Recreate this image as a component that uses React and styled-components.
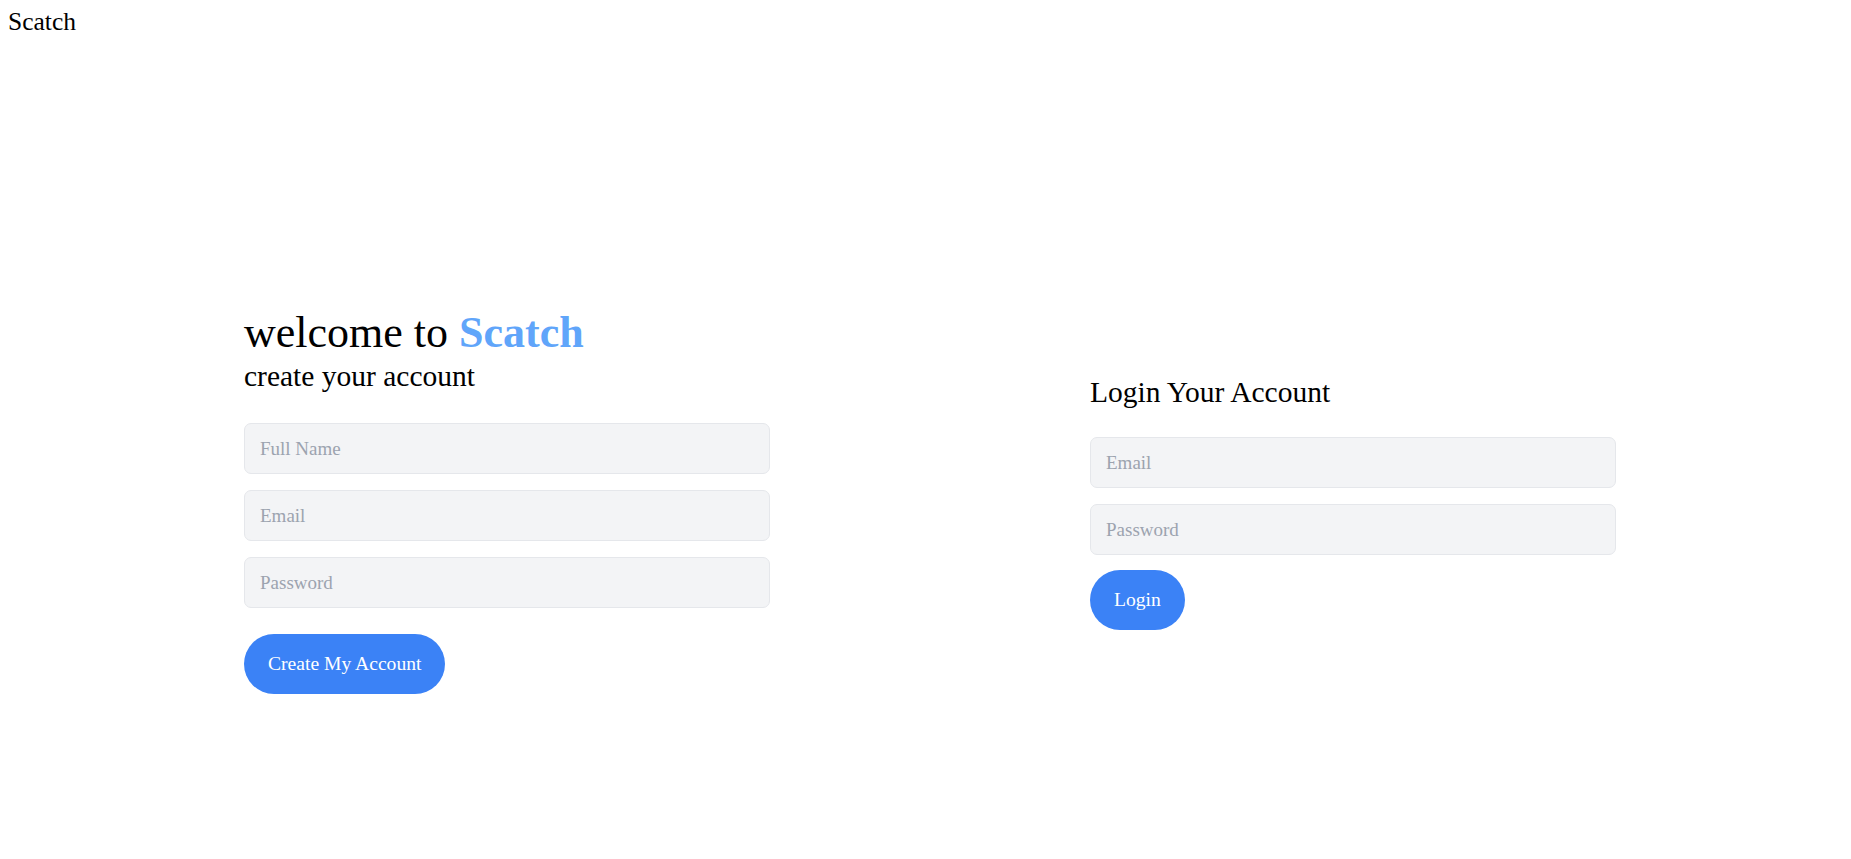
import styled, { createGlobalStyle } from "styled-components";

const GlobalStyle = createGlobalStyle`
  body {
    margin: 8px;
    font-family: "Liberation Serif", "Times New Roman", serif;
    color: #000000;
    background: #ffffff;
  }
  * {
    box-sizing: border-box;
  }
`;

const Brand = styled.div`
  font-size: 25.5px;
  line-height: 27px;
`;

const Main = styled.main`
  display: grid;
  grid-template-columns: 846px 526px;
  align-items: center;
  padding: 274px 0 0 236px;
`;

const Panel = styled.section`
  display: flex;
  flex-direction: column;
  align-items: flex-start;
`;

const Title = styled.h2`
  margin: 0;
  font-size: 44px;
  font-weight: 400;
  line-height: 48px;
  white-space: nowrap;
`;

const Accent = styled.span`
  color: #60a5fa;
  font-weight: 700;
`;

const SubTitle = styled.h3`
  margin: 0 0 ${(p) => p.$gap || 28}px;
  font-size: ${(p) => p.$size || 29.5}px;
  font-weight: 400;
  line-height: 38px;
`;

const Form = styled.form`
  display: flex;
  flex-direction: column;
  align-items: flex-start;
  width: 100%;
`;

const Field = styled.input`
  width: 526px;
  height: 51px;
  margin: 0 0 ${(p) => p.$gap || 16}px;
  padding: 0 15px;
  font-family: "Liberation Serif", "Times New Roman", serif;
  font-size: 19px;
  color: #111827;
  background: #f3f4f6;
  border: 1px solid #e5e7eb;
  border-radius: 7px;
  outline: none;

  &::placeholder {
    color: #9ca3af;
  }
`;

const Button = styled.button`
  height: 60px;
  margin-top: ${(p) => p.$top || 0}px;
  padding: 0 24px;
  font-family: "Liberation Serif", "Times New Roman", serif;
  font-size: 19.6px;
  color: #ffffff;
  background: #3b82f6;
  border: none;
  border-radius: 9999px;
  cursor: pointer;
`;

const App = () => {
  const stop = (e) => e.preventDefault();

  return (
    <>
      <GlobalStyle />
      <Brand>Scatch</Brand>
      <Main>
        <Panel>
          <Title>
            welcome to <Accent>Scatch</Accent>
          </Title>
          <SubTitle>create your account</SubTitle>
          <Form onSubmit={stop}>
            <Field type="text" placeholder="Full Name" />
            <Field type="email" placeholder="Email" />
            <Field type="password" placeholder="Password" $gap={0.01} />
            <Button type="submit" $top={26}>
              Create My Account
            </Button>
          </Form>
        </Panel>
        <Panel>
          <SubTitle $size={29.5} $gap={26}>
            Login Your Account
          </SubTitle>
          <Form onSubmit={stop}>
            <Field type="email" placeholder="Email" />
            <Field type="password" placeholder="Password" $gap={14.5} />
            <Button type="submit">Login</Button>
          </Form>
        </Panel>
      </Main>
    </>
  );
};

export default App;
